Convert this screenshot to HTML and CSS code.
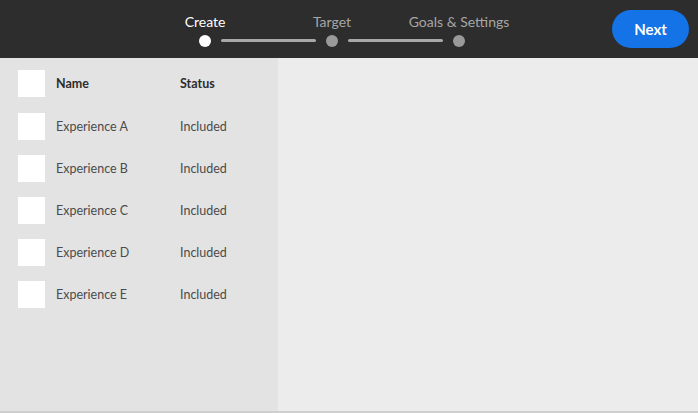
FILE: index.html
```html
<!DOCTYPE html>
<html>
<head>
<meta charset="utf-8">
<link rel="stylesheet" href="styles.css">
</head>
<body>
<header class="topbar">
  <div class="stepper">
    <div class="step active">
      <span class="label">Create</span>
      <span class="dot"></span>
    </div>
    <span class="line"></span>
    <div class="step">
      <span class="label">Target</span>
      <span class="dot"></span>
    </div>
    <span class="line"></span>
    <div class="step">
      <span class="label">Goals &amp; Settings</span>
      <span class="dot"></span>
    </div>
  </div>
  <button class="next">Next</button>
</header>
<main class="content">
  <section class="panel">
    <div class="row head">
      <span class="check"></span>
      <span class="name">Name</span>
      <span class="status">Status</span>
    </div>
    <div class="row">
      <span class="check"></span>
      <span class="name">Experience A</span>
      <span class="status">Included</span>
    </div>
    <div class="row">
      <span class="check"></span>
      <span class="name">Experience B</span>
      <span class="status">Included</span>
    </div>
    <div class="row">
      <span class="check"></span>
      <span class="name">Experience C</span>
      <span class="status">Included</span>
    </div>
    <div class="row">
      <span class="check"></span>
      <span class="name">Experience D</span>
      <span class="status">Included</span>
    </div>
    <div class="row">
      <span class="check"></span>
      <span class="name">Experience E</span>
      <span class="status">Included</span>
    </div>
  </section>
  <section class="canvas"></section>
</main>
</body>
</html>
```
FILE: styles.css
```css
* { box-sizing: border-box; }
html, body { margin: 0; padding: 0; }
body {
  width: 698px;
  height: 413px;
  overflow: hidden;
  background: #ececec;
  font-family: "Lato", "Noto Sans", sans-serif;
  display: flex;
  flex-direction: column;
}
.topbar {
  height: 58px;
  background: #2d2d2d;
  display: flex;
  align-items: stretch;
  flex: none;
}
.stepper {
  display: flex;
  align-items: flex-start;
  margin-left: 199px;
}
.step {
  width: 12px;
  display: flex;
  flex-direction: column;
  align-items: center;
  padding-top: 13px;
}
.step .label {
  white-space: nowrap;
  font-size: 14px;
  color: #a6a6a6;
  line-height: 18px;
  height: 18px;
}
.step.active .label { color: #fff; }
.step .dot {
  width: 12px;
  height: 12px;
  border-radius: 50%;
  background: #9a9a9a;
  margin-top: 4px;
  flex: none;
}
.step.active .dot { background: #fff; }
.line {
  width: 95px;
  height: 3px;
  background: #a8a8a8;
  border-radius: 2px;
  margin: 39px 10px 0 10px;
  flex: none;
}
.next {
  align-self: center;
  margin-left: auto;
  margin-right: 9px;
  width: 77px;
  height: 38px;
  border: none;
  border-radius: 19px;
  background: #1473e6;
  color: #fff;
  font-family: "Lato", sans-serif;
  font-weight: 700;
  font-size: 15px;
  padding: 0;
}
.content {
  flex: 1;
  display: flex;
  border-bottom: 2px solid #cfcfcf;
}
.panel {
  width: 278px;
  background: #e3e3e3;
  padding-top: 4px;
}
.canvas { flex: 1; background: #ececec; }
.row {
  height: 42px;
  display: flex;
  align-items: center;
  padding-left: 18px;
  font-size: 12.5px;
  color: #4b4b4b;
}
.row.head { height: 43px; color: #2c2c2c; font-weight: 700; }
.check {
  width: 27px;
  height: 27px;
  background: #fff;
  flex: none;
}
.name { margin-left: 11px; width: 124px; }
```
